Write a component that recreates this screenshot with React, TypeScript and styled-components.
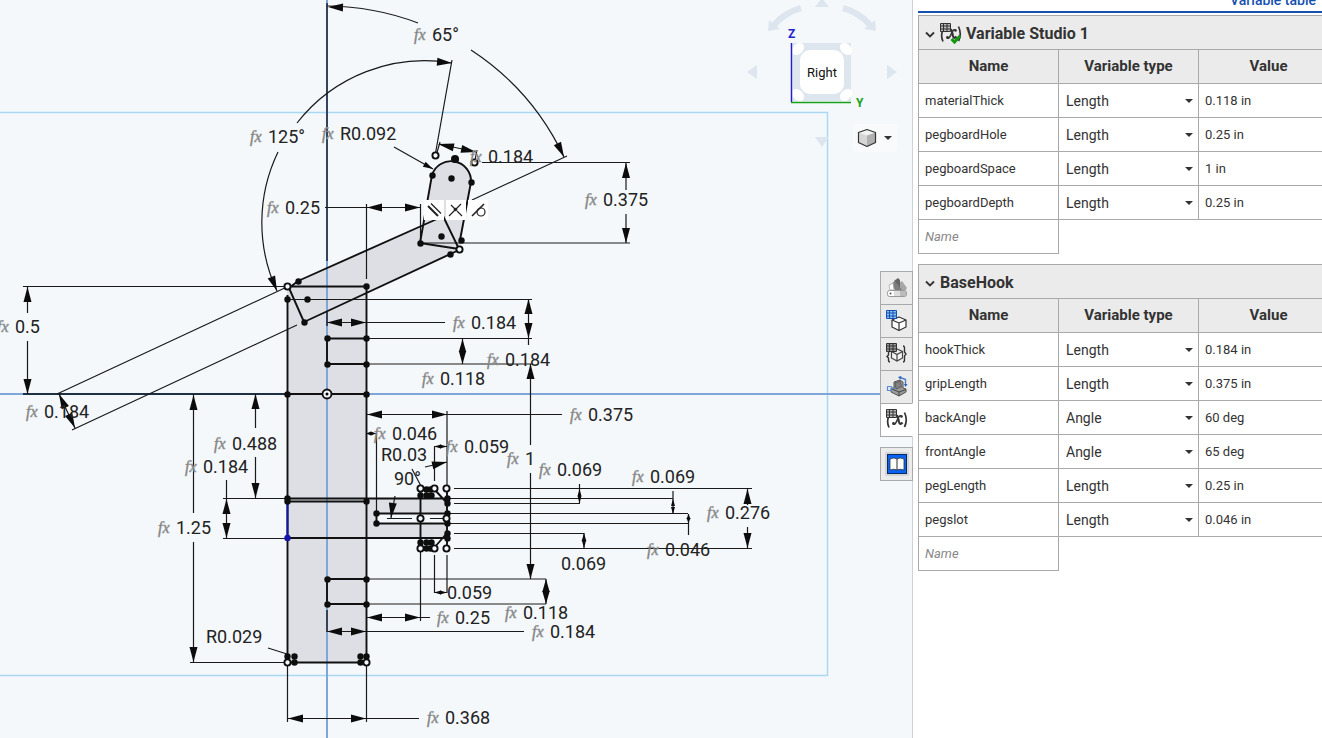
import React from "react";
import styled, { createGlobalStyle, css } from "styled-components";

const GlobalStyle = createGlobalStyle`
  *, *::before, *::after { box-sizing: border-box; }
  body { margin: 0; background: #fff; font-family: Roboto, "Liberation Sans", sans-serif; color: #333; }
  button, input, select { font: inherit; color: inherit; }
`;

const Page = styled.div`
  display: grid;
  grid-template-columns: minmax(0, 1fr) 410px;
  height: 100vh;
  overflow: hidden;
`;

const Viewport = styled.main`
  position: relative;
  background: #f4f8fb;
  min-width: 0;
`;

const Drawing = styled.svg`
  display: block;
  width: 100%;
  height: 100%;
`;

/* ---------- sketch data ---------- */

type Seg = [number, number, number, number];

const thinLines: Seg[] = [
  [452, 60, 435, 156], [472, 200, 567, 156], [394, 147, 433, 169],
  [439, 144, 476, 152], [440, 142, 436, 156], [477, 150, 475, 160],
  [482, 162.5, 630, 162.5], [420, 243, 630, 243], [626, 163, 626, 190], [626, 214, 626, 243],
  [325, 207.5, 420, 207.5], [366.5, 204, 366.5, 279], [420.5, 204, 420.5, 243],
  [23, 286.5, 366, 286.5], [27.5, 287, 27.5, 313], [27.5, 341, 27.5, 394],
  [57, 394, 289, 286], [72, 430, 297, 325], [59, 394, 75, 428],
  [287, 299.5, 532, 299.5], [528.5, 299, 528.5, 345], [366, 338.5, 532, 338.5], [366, 364, 533, 364],
  [327, 322.5, 445, 322.5], [462.5, 338, 462.5, 364],
  [530.5, 364, 530.5, 445], [530.5, 473, 530.5, 579],
  [367, 414.5, 562, 414.5], [447, 411, 447, 490],
  [366, 433.5, 376, 433.5], [376.5, 433, 376.5, 515],
  [434, 446.5, 447, 446.5], [434.5, 447, 434.5, 481],
  [412, 469, 422, 488], [425, 467, 447, 462], [395, 496, 391, 518],
  [387, 518.5, 412, 518.5], [430, 518.5, 447, 518.5],
  [454, 488.5, 752, 488.5], [447, 498.5, 673, 498.5], [454, 503.5, 580, 503.5],
  [447, 513.5, 688, 513.5], [447, 523.5, 688, 523.5], [454, 533.5, 584, 533.5], [454, 548.5, 752, 548.5],
  [579.5, 484, 579.5, 503], [673, 491, 673, 514], [688.5, 514, 688.5, 535], [584, 533, 584, 549],
  [747.5, 489, 747.5, 505], [747.5, 527, 747.5, 548],
  [255.5, 394, 255.5, 428], [255.5, 457, 255.5, 498],
  [223, 498.5, 287, 498.5], [223, 538.5, 287, 538.5], [226.5, 480, 226.5, 538],
  [193.5, 394, 193.5, 513], [193.5, 542, 193.5, 662], [190, 662.5, 287, 662.5],
  [268, 648, 287, 654],
  [287, 718.5, 419, 718.5], [287.5, 662, 287.5, 722], [366.5, 662, 366.5, 722],
  [434, 592.5, 447, 592.5], [434.5, 555, 434.5, 593], [447, 555, 447, 593],
  [367, 617.5, 430, 617.5], [420.5, 548, 420.5, 621],
  [327, 631.5, 524, 631.5],
  [366, 579, 546, 579], [366, 604, 546, 604], [546, 579, 546, 604],
];

const solidLines: Seg[] = [
  [287.5, 295, 287.5, 662], [366.5, 286, 366.5, 662], [290, 286.5, 366, 286.5], [287, 662.5, 366, 662.5],
  [287, 394, 366, 394],
  [327, 338.5, 366, 338.5], [327, 364, 366, 364], [327, 338, 327, 364],
  [327, 579, 366, 579], [327, 604, 366, 604], [327, 579, 327, 604],
  [287, 498.5, 447, 498.5], [287, 501.5, 366, 501.5], [287, 538, 447, 538],
  [376, 513.5, 447, 513.5], [376, 523.5, 447, 523.5], [376.5, 513, 376.5, 524],
  [420.5, 489, 420.5, 548], [447, 489, 447, 548], [434, 489, 447, 503], [434, 548, 447, 533],
  [289, 288, 298, 281], [298, 281, 437, 219], [289, 288, 304, 322], [304, 322, 459, 250],
  [443, 216, 459, 249], [420, 243, 459, 249], [432, 175, 420, 243], [471, 182, 460, 240],
];

/* tip x, tip y, heading in degrees (0 = right, 90 = down), length */
type Arrow = [number, number, number, number?];

const arrows: Arrow[] = [
  [328, 7, 182], [564, 157, 64], [452, 63, 5], [277, 291, 68],
  [433, 169, 29, 10], [438, 144, 192, 16], [476, 152, 12, 15],
  [626, 163, -90], [626, 243, 90], [367, 207.5, 180], [420, 207.5, 0],
  [27.5, 287, -90], [27.5, 394, 90], [59, 394, 245], [75, 428, 65],
  [528.5, 299, -90], [528.5, 338, 90], [327, 322.5, 180], [366, 322.5, 0],
  [462.5, 339, -90, 13], [462.5, 364, 90, 13], [530.5, 364, -90], [530.5, 579, 90],
  [367, 414.5, 180], [447, 414.5, 0], [366, 433.5, 180, 5], [376, 433.5, 0, 5],
  [434, 446.5, 180, 7], [447, 446.5, 0, 7], [447, 462, -13], [391, 518, 97],
  [579.5, 489, -90, 7], [579.5, 503, 90, 7], [673, 499, -90, 7], [673, 514, 90, 7],
  [688.5, 514, -90, 5], [688.5, 523, 90, 5], [584, 533, -90, 8], [584, 548, 90, 8],
  [747.5, 489, -90], [747.5, 548, 90], [255.5, 394, -90], [255.5, 498, 90],
  [226.5, 499, -90], [226.5, 538, 90], [193.5, 395, -90], [193.5, 662, 90],
  [288, 718.5, 180], [366, 718.5, 0], [434, 592.5, 180, 7], [447, 592.5, 0, 7],
  [367, 617.5, 180], [420, 617.5, 0], [327, 631.5, 180], [366, 631.5, 0],
  [546, 579, -90, 13], [546, 604, 90, 13],
];

const dots: [number, number][] = [
  [298, 281], [366, 286], [287, 299], [307, 299], [304, 322], [327, 338], [366, 338], [327, 364], [366, 364],
  [287, 394], [366, 394], [287, 498], [287, 501], [366, 501], [376, 513], [376, 523],
  [327, 579], [366, 579], [327, 604], [366, 604],
  [287, 656], [294, 656], [294, 662], [360, 656], [366, 656], [360, 662],
  [432, 175], [455, 159], [451, 178], [471, 182], [441, 236], [420, 243], [461, 240], [450, 254],
  [420, 495], [426, 495], [431, 495], [426, 489], [430, 489],
  [447, 498], [447, 503], [447, 513], [447, 523], [447, 533], [447, 538],
  [420, 542], [426, 542], [431, 542], [426, 548], [430, 548],
];

const rings: [number, number][] = [
  [435, 155], [474, 162], [459, 249], [287, 286], [287, 662], [366, 662],
  [420, 488], [434, 488], [446, 488], [420, 518], [446, 518], [420, 548], [434, 548], [446, 548],
];

/* x, baseline, text, driven by an expression */
const labels: [number, number, string, boolean][] = [
  [432, 41, "65°", true], [268, 143, "125°", true], [340, 140, "R0.092", true], [488, 163, "0.184", true],
  [603, 206, "0.375", true], [285, 214, "0.25", true], [15, 333, "0.5", true], [44, 418, "0.184", true],
  [232, 450, "0.488", true], [203, 473, "0.184", true], [471, 329, "0.184", true], [505, 366, "0.184", true],
  [440, 385, "0.118", true], [588, 421, "0.375", true], [392, 440, "0.046", true], [464, 453, "0.059", true],
  [381, 461, "R0.03", false], [394, 485, "90°", false], [525, 465, "1", true], [557, 476, "0.069", true],
  [650, 483, "0.069", true], [725, 519, "0.276", true], [665, 556, "0.046", true], [561, 570, "0.069", false],
  [176, 534, "1.25", true], [206, 643, "R0.029", false], [447, 599, "0.059", false], [455, 624, "0.25", true],
  [523, 619, "0.118", true], [550, 638, "0.184", true], [445, 724, "0.368", true],
];

const ArrowHead = ({ tip }: { tip: Arrow }) => {
  const [x, y, heading, length = 15] = tip;
  const half = Math.min(4, Math.max(2, length / 3.5));
  return (
    <path d={`M0 0L${-length} ${-half}V${half}Z`} transform={`translate(${x} ${y}) rotate(${heading})`} />
  );
};

const segPath = (list: Seg[]) => list.map(([a, b, c, d]) => `M${a} ${b}L${c} ${d}`).join("");

const Sketch = () => (
  <Drawing role="img" aria-label="Hook sketch with dimensions">
    <path d="M-5 112.500H827.500V675.500H-5" fill="none" stroke="#a8d8f2" strokeWidth="1.500" />
    <g fill="#dddfe4">
      <path d="M287 287H366V498H447V513.500H376V523.500H447V538H366V662H287Z" />
      <path d="M289 288L298 281L437 219L443 216L459 250L304 322Z" />
      <path d="M420 243L432 175A20 20 0 0 1 471 182L460 249Z" />
    </g>
    <path d="M327 0V738M0 394H900" stroke="#7ea6d6" strokeWidth="2" />
    <path d="M327 3V261M327 312V326M327 610V632" stroke="#34445b" strokeWidth="2" />
    <path d="M23 394H287" stroke="#1f2f44" strokeWidth="2" />
    <g fill="none" stroke="#1a1a1a" strokeWidth="1.200">
      <path d={segPath(thinLines)} />
      <path d="M327 6A260 260 0 0 1 418 23M471 50A260 260 0 0 1 564 157" />
      <path d="M452 63A162 162 0 0 0 297 123M278 152A162 162 0 0 0 277 291" />
    </g>
    <g fill="none" stroke="#111" strokeWidth="1.900">
      <path d={segPath(solidLines)} />
      <path d="M432 175A20 20 0 0 1 471 182" />
    </g>
    <path d="M287.500 504V538" stroke="#1414a8" strokeWidth="2" />
    <g fill="#0c0c0c">{arrows.map((a, i) => <ArrowHead key={i} tip={a} />)}</g>
    <g fill="#0e0e0e">{dots.map(([x, y], i) => <circle key={i} cx={x + 0.5} cy={y + 0.5} r="3.200" />)}</g>
    <circle cx="455" cy="159" r="4" fill="#0e0e0e" />
    <circle cx="287.500" cy="538" r="3.200" fill="#1414a8" />
    <g fill="#f4f8fb" stroke="#0e0e0e" strokeWidth="1.900">
      {rings.map(([x, y], i) => <circle key={i} cx={x + 0.5} cy={y + 0.5} r="3.100" />)}
      <circle cx="327" cy="394" r="4.500" />
    </g>
    <circle cx="327" cy="394" r="1.500" />
    {labels.map(([x, y, text, driven], i) => (
      <g key={i}>
        {driven && <FxText x={x - 18} y={y - 1}>fx</FxText>}
        <DimText x={x} y={y}>{text}</DimText>
      </g>
    ))}
    <g fill="#fff">
      <path d="M424 200H444V220H424ZM446 200H466V220H446ZM468 200H488V220H468Z" />
    </g>
    <g fill="none" stroke="#222" strokeWidth="1.200">
      <path d="M431 203.500L441 213.500" />
      <path d="M428 206L438 216" strokeWidth="2" />
      <path d="M449 216L461 204M451 205L455 209M457 211L462 216" />
      <path d="M472 216L484 204" strokeWidth="1.600" />
      <circle cx="481" cy="212" r="4" />
    </g>
    <circle cx="455.500" cy="209.500" r="1.800" fill="#222" />
  </Drawing>
);

const DimText = styled.text`
  font: 18px Roboto, "Liberation Sans", sans-serif;
  fill: #222;
`;

const FxText = styled.text`
  font: italic 16px "Liberation Serif", serif;
  fill: #777;
  stroke: #999;
  stroke-width: 0.5px;
`;

/* ---------- view cube ---------- */

const ViewCube = styled.nav`
  position: absolute;
  top: 0;
  right: 12px;
  width: 160px;
  height: 156px;
`;

const CubeFace = styled.button`
  position: absolute;
  top: 50px;
  left: 60px;
  width: 44px;
  height: 44px;
  padding: 0;
  border: 0;
  border-radius: 10px;
  background: #fff;
  color: #111;
  font-size: 13px;
`;

const ShadeButton = styled.button`
  position: absolute;
  top: 124px;
  right: 3px;
  width: 44px;
  height: 28px;
  padding: 0 4px;
  display: flex;
  align-items: center;
  justify-content: space-between;
  border: 0;
  border-radius: 3px;
  background: #f8fafb;
`;

const AxisText = styled.text`
  font: bold 12px Roboto, sans-serif;
`;

const ViewControls = () => (
  <ViewCube aria-label="View orientation">
    <svg width="160" height="156">
      <g fill="#dde6ee">
        <path d="M53 43H111V101H53Z" />
        <path d="M7 72L17 65V79ZM157 72L147 65V79ZM82 -2L75 7H89ZM82 147L75 137H89Z" />
        <path d="M29 20L28 31L40 29ZM135 20L136 31L124 29Z" />
      </g>
      <path d="M61 8Q44 13 34 25M103 8Q120 13 130 25" fill="none" stroke="#dde6ee" strokeWidth="6" />
      <g fill="#fff">
        <ellipse cx="58" cy="49" rx="7" ry="5" transform="rotate(-45 58 49)" />
        <ellipse cx="106" cy="49" rx="7" ry="5" transform="rotate(45 106 49)" />
        <ellipse cx="58" cy="95" rx="7" ry="5" transform="rotate(45 58 95)" />
        <ellipse cx="106" cy="95" rx="7" ry="5" transform="rotate(-45 106 95)" />
      </g>
      <path d="M51.500 43V102" stroke="#2020c4" strokeWidth="1.500" />
      <path d="M51 102.500H111" stroke="#18a018" strokeWidth="1.500" />
      <AxisText x="48" y="38" fill="#2424cc">Z</AxisText>
      <AxisText x="116" y="107" fill="#18a018">Y</AxisText>
    </svg>
    <CubeFace>Right</CubeFace>
    <ShadeButton aria-label="Shading options">
      <svg width="20" height="20" viewBox="0 0 20 20" strokeLinejoin="round">
        <path d="M10 1.500L18.500 4.500L10 7.500L1.500 4.500Z" fill="#f2f2f2" />
        <path d="M1.500 4.500L10 7.500V18.500L1.500 14.500Z" fill="#d6d6d6" />
        <path d="M18.500 4.500L10 7.500V18.500L18.500 14.500Z" fill="#b0b0b0" />
        <path d="M10 1.500L18.500 4.500V14.500L10 18.500L1.500 14.500V4.500Z" fill="none" stroke="#333" strokeWidth="1.200" />
      </svg>
      <Caret />
    </ShadeButton>
  </ViewCube>
);

const Caret = () => (
  <svg width="10" height="6" viewBox="0 0 10 6" aria-hidden="true">
    <path d="M1 1H9L5 5Z" fill="#333" />
  </svg>
);

/* ---------- side tabs ---------- */

const TabRail = styled.div`
  position: absolute;
  top: 271px;
  right: -1px;
  width: 33px;
  display: flex;
  flex-direction: column;
  z-index: 1;
`;

const RailTab = styled.button<{ $active?: boolean; $apart?: boolean }>`
  display: flex;
  align-items: center;
  justify-content: center;
  height: 34px;
  padding: 0;
  border: 1px solid #a9a9a9;
  background: #ebebeb;
  & + & { margin-top: -1px; }
  ${(p) => p.$active && css`background: #fff; border-right-color: #fff;`}
  ${(p) => p.$apart && css`&& { margin-top: 10px; }`}
`;

const Grid = ({ color, fill }: { color: string; fill: string }) => (
  <>
    <path d="M1 1H10V8H1Z" fill={fill} />
    <path d="M.5 .5H10.500V8.500H.5ZM3.500 0V8.500M7 0V8.500M.5 3H10.500M.5 6H10.500" fill="none" stroke={color} />
  </>
);

const AppearanceIcon = () => (
  <svg width="22" height="22" viewBox="0 0 22 22">
    <path d="M13 6L16 4L21 11L19 14H12Z" fill="#a6a6a6" />
    <path d="M8 4L12 1L14 3V14H9Z" fill="#666" />
    <path d="M4 8L9 4L16 13L13 16Z" fill="#7e7e7e" />
    <path d="M3 8L7 6L8 13H4Z" fill="#fff" stroke="#aaa" strokeWidth=".8" />
    <rect x="1.500" y="13.500" width="19" height="6" rx="2" fill="#fff" stroke="#999" />
    <path d="M8 14H14V19H8Z" fill="#ddd" />
    <path d="M14 14H20V19H14Z" fill="#bbb" />
    <circle cx="4.500" cy="16.500" r="1" fill="#555" />
  </svg>
);

const ConfigIcon = () => (
  <svg width="22" height="22" viewBox="0 0 22 22">
    <g strokeLinejoin="round" stroke="#333" strokeWidth="1.200">
      <path d="M13 7L20 10V17L13 20.500L6 17V10Z" fill="#fff" />
      <path d="M6 10L13 13L20 10M13 13V20.500" fill="none" />
    </g>
    <Grid color="#1450b4" fill="#8ec4f4" />
  </svg>
);

const CustomTableIcon = () => (
  <svg width="22" height="22" viewBox="0 0 22 22">
    <path d="M11 6L16.500 8.500V15L11 18L5.500 15V8.500ZM5.500 8.500L11 11.500L16.500 8.500M11 11.500V18" fill="#f4f4f4" stroke="#444" strokeWidth="1.200" />
    <path d="M4 8Q2.500 8 2.500 10V12L1 13.500L2.500 15V17Q2.500 19 4 19M17 3Q18.500 3 18.500 5V9L20 11L18.500 13V17Q18.500 19 17 19" fill="none" stroke="#333" strokeWidth="1.400" />
    <Grid color="#333" fill="#999" />
  </svg>
);

const PositionsIcon = () => (
  <svg width="22" height="22" viewBox="0 0 22 22" strokeLinejoin="round">
    <path d="M8 6L14 4L17 6V12L20 13V16L13 20L5 16V12L8 12Z" fill="#9a9a9a" stroke="#555" />
    <path d="M9 7L14 5L15.500 11L10 13Z" fill="#808080" stroke="#555" strokeWidth=".8" />
    <path d="M5 12.500L13 16L20 13.500M13 16V20" fill="none" stroke="#444" />
    <path d="M1.500 10.500H5.500V14.500H1.500ZM5 12.500H9" fill="none" stroke="#5a8bd0" strokeWidth="1.200" />
    <path d="M14 1.500L19.500 3.500V9" fill="none" stroke="#4a7fca" strokeWidth="1.400" />
    <path d="M15.500 0L12 1L14.500 3.500ZM18 8H21.500L19.500 11Z" fill="#2a62b8" />
  </svg>
);

const VariableIcon = ({ checked }: { checked?: boolean }) => (
  <svg width="22" height="22" viewBox="0 0 22 22" aria-hidden="true">
    <path d="M2.500 8Q.5 13 3 18.500M18.500 3.500Q22 11 18.500 18" fill="none" stroke="#333" strokeWidth="1.700" />
    <path d="M7 14.500Q8.500 16.500 10 13.500L12.500 8.500Q14 5.500 16 7.500" fill="none" stroke="#333" strokeWidth="1.600" />
    <path d="M10 7Q11.500 6 12 9L13 13Q14 16.500 16.500 13.500" fill="none" stroke="#333" strokeWidth="2.200" />
    <circle cx="7.500" cy="14.500" r="1.400" fill="#333" />
    <circle cx="15.500" cy="7.500" r="1.300" fill="#333" />
    <Grid color="#333" fill="#bbb" />
    {checked && <path d="M11.500 16L14.500 19L20 13" fill="none" stroke="#12980f" strokeWidth="3" />}
  </svg>
);

const BookIcon = () => (
  <svg width="24" height="24" viewBox="0 0 24 24">
    <rect width="24" height="24" rx="2" fill="#d4d4d4" />
    <rect x="2.500" y="2.500" width="19" height="19" fill="#0a62f0" stroke="#052a66" />
    <path d="M5 7Q9 5 12 7Q15 5 19 7V18Q15 16.500 12 18Q9 16.500 5 18Z" fill="#fff" stroke="#333" strokeWidth=".8" />
    <path d="M12 7V18" stroke="#333" />
  </svg>
);

/* ---------- variable table panel ---------- */

const Panel = styled.aside`
  border-left: 1px solid #cfd3d6;
  padding-left: 5px;
  background: #fff;
  overflow: hidden;
  min-width: 0;
`;

const PanelTitle = styled.header`
  display: flex;
  justify-content: flex-end;
  align-items: flex-end;
  height: 13px;
  margin-bottom: 2px;
  padding: 0 6px 3px 0;
  border-bottom: 2px solid #1651b0;
  color: #1651b0;
  font-size: 14px;
  font-weight: 500;
  line-height: 16px;
  overflow: hidden;
`;

const Section = styled.section`
  width: 421px;
  margin-bottom: 10px;
`;

const SectionToggle = styled.button`
  display: flex;
  align-items: center;
  gap: 4px;
  width: 100%;
  height: 34px;
  padding: 2px 5px 0;
  border: 1px solid #a9a9a9;
  border-bottom: 0;
  background: #ebebeb;
  font-size: 16px;
  font-weight: 700;
`;

const Table = styled.table`
  width: 100%;
  table-layout: fixed;
  border-collapse: collapse;
  font-size: 14px;
`;

const HeadCell = styled.th`
  height: 34px;
  padding: 0 0 2px;
  border: 1px solid #a9a9a9;
  background: #ebebeb;
  font-size: 15px;
  font-weight: 700;
`;

const Cell = styled.td<{ $blank?: boolean }>`
  height: 34px;
  padding: 0 6px;
  border: ${(p) => (p.$blank ? "0" : "1px solid #a9a9a9")};
`;

const Field = styled.input`
  display: block;
  width: 100%;
  height: 24px;
  padding: 0;
  border: 0;
  outline: 0;
  background: transparent;
  font-size: 13px;
  &::placeholder { color: #888; font-style: italic; opacity: 1; }
`;

const SelectBox = styled.span`
  display: flex;
  align-items: center;
  margin-right: -2px;
`;

const TypeSelect = styled.select`
  flex: 1;
  min-width: 0;
  height: 24px;
  padding: 0 0 0 1px;
  border: 0;
  background: transparent;
  appearance: none;
  font-size: 14px;
`;

const Chevron = () => (
  <svg width="12" height="12" viewBox="0 0 12 12" aria-hidden="true">
    <path d="M2 4.500L6 8.500L10 4.500" fill="none" stroke="#333" strokeWidth="1.800" />
  </svg>
);

type Variable = [string, string, string];

const studioRows: Variable[] = [
  ["materialThick", "Length", "0.118 in"],
  ["pegboardHole", "Length", "0.25 in"],
  ["pegboardSpace", "Length", "1 in"],
  ["pegboardDepth", "Length", "0.25 in"],
];

const hookRows: Variable[] = [
  ["hookThick", "Length", "0.184 in"],
  ["gripLength", "Length", "0.375 in"],
  ["backAngle", "Angle", "60 deg"],
  ["frontAngle", "Angle", "65 deg"],
  ["pegLength", "Length", "0.25 in"],
  ["pegslot", "Length", "0.046 in"],
];

const VariableSection = ({ title, rows, icon }: { title: string; rows: Variable[]; icon?: React.ReactNode }) => (
  <Section>
    <SectionToggle aria-expanded="true">
      <Chevron />
      {icon}
      {title}
    </SectionToggle>
    <Table>
      <thead>
        <tr>
          <HeadCell>Name</HeadCell>
          <HeadCell>Variable type</HeadCell>
          <HeadCell>Value</HeadCell>
        </tr>
      </thead>
      <tbody>
        {rows.map(([name, type, value]) => (
          <tr key={name}>
            <Cell><Field type="text" aria-label="Name" defaultValue={name} /></Cell>
            <Cell>
              <SelectBox>
                <TypeSelect aria-label={`${name} type`} defaultValue={type}>
                  <option>Length</option>
                  <option>Angle</option>
                </TypeSelect>
                <Caret />
              </SelectBox>
            </Cell>
            <Cell><Field type="text" aria-label={`${name} value`} defaultValue={value} /></Cell>
          </tr>
        ))}
        <tr>
          <Cell><Field type="text" aria-label="New variable name" placeholder="Name" /></Cell>
          <Cell $blank />
          <Cell $blank />
        </tr>
      </tbody>
    </Table>
  </Section>
);

export default function App() {
  return (
    <Page>
      <GlobalStyle />
      <Viewport>
        <Sketch />
        <ViewControls />
        <TabRail>
          <RailTab aria-label="Appearance"><AppearanceIcon /></RailTab>
          <RailTab aria-label="Configurations"><ConfigIcon /></RailTab>
          <RailTab aria-label="Custom tables"><CustomTableIcon /></RailTab>
          <RailTab aria-label="Named positions"><PositionsIcon /></RailTab>
          <RailTab aria-label="Variables" $active><VariableIcon /></RailTab>
          <RailTab aria-label="Learning" $apart><BookIcon /></RailTab>
        </TabRail>
      </Viewport>
      <Panel>
        <PanelTitle>Variable table</PanelTitle>
        <VariableSection title="Variable Studio 1" rows={studioRows} icon={<VariableIcon checked />} />
        <VariableSection title="BaseHook" rows={hookRows} />
      </Panel>
    </Page>
  );
}
